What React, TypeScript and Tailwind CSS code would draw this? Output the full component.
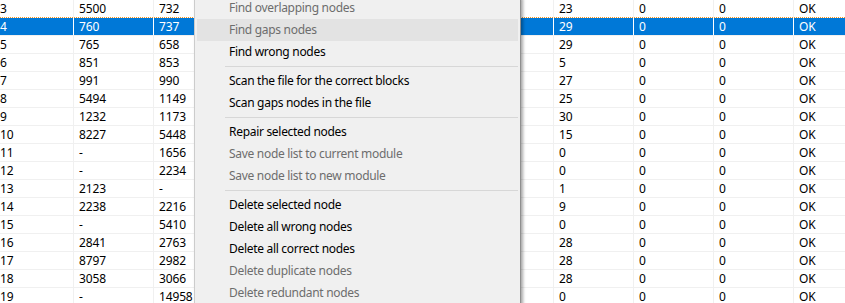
import React from "react";

type Row = { id: number; a: string; b: string; c: string };

const rows: Row[] = [
  { id: 3, a: "5500", b: "732", c: "23" },
  { id: 4, a: "760", b: "737", c: "29" },
  { id: 5, a: "765", b: "658", c: "29" },
  { id: 6, a: "851", b: "853", c: "5" },
  { id: 7, a: "991", b: "990", c: "27" },
  { id: 8, a: "5494", b: "1149", c: "25" },
  { id: 9, a: "1232", b: "1173", c: "30" },
  { id: 10, a: "8227", b: "5448", c: "15" },
  { id: 11, a: "-", b: "1656", c: "0" },
  { id: 12, a: "-", b: "2234", c: "0" },
  { id: 13, a: "2123", b: "-", c: "1" },
  { id: 14, a: "2238", b: "2216", c: "9" },
  { id: 15, a: "-", b: "5410", c: "0" },
  { id: 16, a: "2841", b: "2763", c: "28" },
  { id: 17, a: "8797", b: "2982", c: "28" },
  { id: 18, a: "3058", b: "3066", c: "28" },
  { id: 19, a: "-", b: "14958", c: "0" },
];

const selectedId = 4;

type Item = { label: string; disabled?: boolean; hover?: boolean } | "sep";

const menu: Item[] = [
  { label: "Find overlapping nodes", disabled: true },
  { label: "Find gaps nodes", disabled: true, hover: true },
  { label: "Find wrong nodes" },
  "sep",
  { label: "Scan the file for the correct blocks" },
  { label: "Scan gaps nodes in the file" },
  "sep",
  { label: "Repair selected nodes" },
  { label: "Save node list to current module", disabled: true },
  { label: "Save node list to new module", disabled: true },
  "sep",
  { label: "Delete selected node" },
  { label: "Delete all wrong nodes" },
  { label: "Delete all correct nodes" },
  { label: "Delete duplicate nodes", disabled: true },
  { label: "Delete redundant nodes", disabled: true },
];

const TableRow = ({ row, nextSelected }: { row: Row; nextSelected: boolean }) => {
  const sel = row.id === selectedId;
  const line = sel ? "border-white" : "border-[#f0f0f0]";
  const bottom = nextSelected
    ? "border-b border-dotted border-b-[#f7941d]"
    : "border-b border-b-[#f0f0f0]";
  return (
    <div
      className={`flex h-[18px] leading-[18px] ${bottom} ${
        sel ? "bg-[#0078d7] text-white" : "text-black"
      }`}
    >
      <div className={`w-[74px] shrink-0 border-r ${line} pl-0`}>{row.id}</div>
      <div className={`w-[80px] shrink-0 border-r ${line} pl-[5px]`}>{row.a}</div>
      <div className={`w-[400px] shrink-0 border-r ${line} pl-[5px]`}>{row.b}</div>
      <div className={`w-[80px] shrink-0 border-r ${line} pl-[5px]`}>{row.c}</div>
      <div className={`w-[80px] shrink-0 border-r ${line} pl-[5px]`}>0</div>
      <div className={`w-[80px] shrink-0 border-r ${line} pl-[5px]`}>0</div>
      <div className="flex-1 pl-[5px]">OK</div>
    </div>
  );
};

export default function App() {
  return (
    <div
      className="relative w-[845px] h-[303px] overflow-hidden bg-white text-[12px]"
      style={{ fontFamily: '"Noto Sans", "Open Sans", sans-serif' }}
    >
      <div className="flex flex-col tracking-[-0.15px]">
        {rows.map((r, i) => (
          <TableRow
            key={r.id}
            row={r}
            nextSelected={rows[i + 1]?.id === selectedId}
          />
        ))}
      </div>

      <div className="absolute left-[194px] top-[-4px] w-[327px] bg-[#f0f0f0] border border-[#cccccc] border-r-[#8f8f8f] shadow-[2px_2px_3px_rgba(0,0,0,0.35)] tracking-[-0.3px]">
        {menu.map((item, i) =>
          item === "sep" ? (
            <div key={i} className="h-[7px] flex items-center pl-[30px] pr-[2px]">
              <div className="h-px w-full bg-[#d7d7d7]" />
            </div>
          ) : (
            <div
              key={i}
              className={`h-[22px] mx-[2px] flex items-center pl-[32px] ${
                item.hover ? "bg-[#e3e3e3]" : ""
              } ${item.disabled ? "text-[#6d6d6d]" : "text-black"}`}
            >
              {item.label}
            </div>
          )
        )}
      </div>
    </div>
  );
}
